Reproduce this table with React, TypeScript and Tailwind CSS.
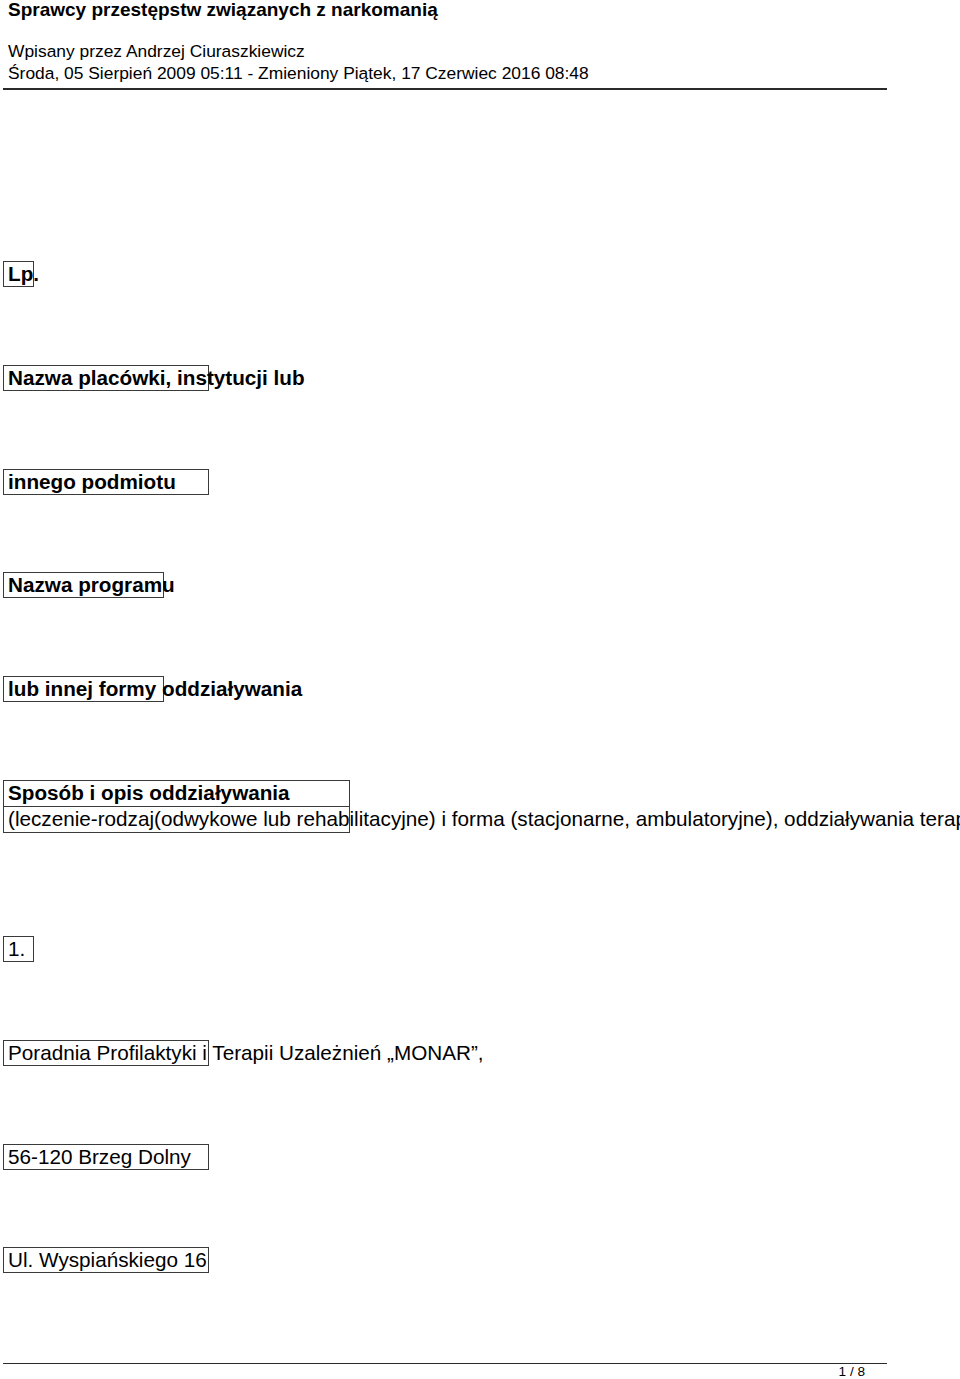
import React from "react";

function Box({ w, bold, children }: { w: string; bold?: boolean; children: React.ReactNode }) {
  return (
    <div
      className={`${w} h-[26px] border border-[#3a3a3a] pl-[4px] leading-[24px] whitespace-nowrap text-[20.7px] ${bold ? "font-bold" : ""}`}
    >
      {children}
    </div>
  );
}

export default function App() {
  return (
    <div className="w-[960px] h-[1379px] overflow-hidden bg-white text-black font-['Liberation_Sans',Arial,sans-serif] flex flex-col">
      <div className="pl-[8px]">
        <h1 className="text-[19px] leading-[20px] font-bold whitespace-nowrap">
          Sprawcy przestępstw związanych z narkomanią
        </h1>
        <div className="mt-[19.7px] text-[17.4px] leading-[22px] whitespace-nowrap">
          Wpisany przez Andrzej Ciuraszkiewicz
        </div>
        <div className="text-[17.4px] leading-[22px] whitespace-nowrap">
          Środa, 05 Sierpień 2009 05:11 - Zmieniony Piątek, 17 Czerwiec 2016 08:48
        </div>
      </div>
      <div className="ml-[3px] w-[884px] h-[2px] bg-[#2a2a2a] mt-[4.8px]" />

      <div className="ml-[3px] mt-[171.5px] flex flex-col gap-[77.7px]">
        <Box w="w-[31px]" bold>
          Lp.
        </Box>
        <Box w="w-[206px]" bold>
          Nazwa placówki, instytucji lub
        </Box>
        <Box w="w-[206px]" bold>
          innego podmiotu
        </Box>
        <Box w="w-[161px]" bold>
          Nazwa programu
        </Box>
        <Box w="w-[161px]" bold>
          lub innej formy oddziaływania
        </Box>
        <div className="w-[347px] h-[53px] border border-[#3a3a3a] whitespace-nowrap text-[20.7px]">
          <div className="h-[26px] border-b border-[#3a3a3a] pl-[4px] leading-[24px] font-bold">
            Sposób i opis oddziaływania
          </div>
          <div className="h-[25px] pl-[4px] leading-[24px]">
            (leczenie-rodzaj(odwykowe lub rehabilitacyjne) i forma (stacjonarne, ambulatoryjne), oddziaływania terapeutyczne)
          </div>
        </div>
        <div className="mt-[26px]">
          <Box w="w-[31px]">1.</Box>
        </div>
        <Box w="w-[206px]">Poradnia Profilaktyki i Terapii Uzależnień „MONAR”,</Box>
        <Box w="w-[206px]">56-120 Brzeg Dolny</Box>
        <Box w="w-[206px]">Ul. Wyspiańskiego 16</Box>
      </div>

      <div className="ml-[3px] mt-[89.7px] w-[884px] h-[1.5px] bg-[#2a2a2a]" />
      <div className="ml-[3px] w-[884px] flex justify-end pr-[22px] text-[13.6px] leading-[15px]">
        1 / 8
      </div>
    </div>
  );
}
